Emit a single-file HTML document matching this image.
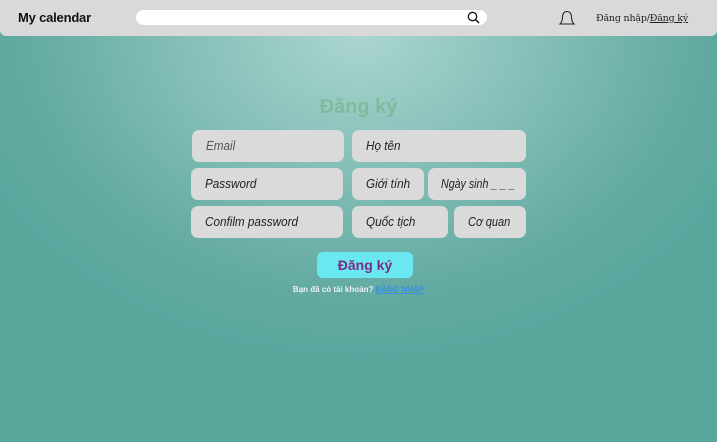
<!DOCTYPE html>
<html><head><meta charset="utf-8"><style>
*{margin:0;padding:0;box-sizing:border-box}
body{width:717px;height:442px;overflow:hidden;font-family:"Liberation Sans","DejaVu Sans",sans-serif;
background:radial-gradient(ellipse 420px 330px at 360px 30px,#acd6d1 0%,#86c0b9 40%,#62aaa2 80%,#5aa69d 100%);position:relative}
.hdr{position:absolute;left:0;top:0;width:717px;height:36px;background:#d9d9d9;border-radius:0 0 6px 6px}
.logo{position:absolute;left:18px;top:10px;font-size:13px;font-weight:bold;color:#111;letter-spacing:-0.2px}
.search{position:absolute;left:136px;top:10px;width:351px;height:15px;background:#fff;border-radius:8px}
.auth{position:absolute;left:596px;top:13px;font-family:"DejaVu Serif",serif;font-size:9.5px;color:#222;letter-spacing:-0.2px}
.title{position:absolute;left:0;width:717px;top:96px;text-align:center;font-size:20px;font-weight:bold;color:#7fbb9b}
.f{position:absolute;height:32px;background:#dadada;border-radius:7px;font-style:italic;font-size:13px;color:#222;padding-left:14px;line-height:32px;white-space:nowrap;overflow:hidden}
.f span{display:inline-block;transform:scaleX(0.9);transform-origin:left center}
.btn{position:absolute;left:317px;top:252px;width:96px;height:26px;background:#69e8f1;border-radius:6px;text-align:center;line-height:26px;font-weight:bold;font-size:14px;color:#7a2c86}
.note{position:absolute;left:0;width:717px;top:285px;text-align:center;font-size:8px;font-weight:bold;color:#eef}
.note span{color:#3a8ee0;text-decoration:underline}
</style></head><body>
<div class="hdr">
<div class="logo">My calendar</div>
<div class="search"><svg style="position:absolute;right:7px;top:1px" width="13" height="13" viewBox="0 0 13 13"><circle cx="5.5" cy="5.5" r="4.2" fill="none" stroke="#111" stroke-width="1.3"/><line x1="8.6" y1="8.6" x2="12" y2="12" stroke="#111" stroke-width="1.4"/></svg></div>
<svg style="position:absolute;left:558px;top:10px" width="18" height="16" viewBox="0 0 18 16"><path d="M2 14 C4 12 4.5 10 4.5 7 C4.5 3.5 6.5 1.5 9 1.5 C11.5 1.5 13.5 3.5 13.5 7 C13.5 10 14 12 16 14 Z" fill="none" stroke="#222" stroke-width="1.1"/></svg>
<div class="auth">Đăng nhập/<u>Đăng ký</u></div>
</div>
<div class="title">Đăng ký</div>
<div class="f" style="left:192px;top:130px;width:152px;color:#555"><span>Email</span></div>
<div class="f" style="left:352px;top:130px;width:174px"><span>Họ tên</span></div>
<div class="f" style="left:191px;top:168px;width:152px"><span>Password</span></div>
<div class="f" style="left:352px;top:168px;width:72px"><span>Giới tính</span></div>
<div class="f" style="left:428px;top:168px;width:98px;padding-left:13px"><span style="transform:scaleX(0.82)">Ngày sinh _ _ _</span></div>
<div class="f" style="left:191px;top:206px;width:152px"><span>Confilm password</span></div>
<div class="f" style="left:352px;top:206px;width:96px"><span>Quốc tịch</span></div>
<div class="f" style="left:454px;top:206px;width:72px"><span style="transform:scaleX(0.85)">Cơ quan</span></div>
<div class="btn">Đăng ký</div>
<div class="note">Bạn đã có tài khoản? <span>ĐĂNG NHẬP</span></div>
</body></html>
